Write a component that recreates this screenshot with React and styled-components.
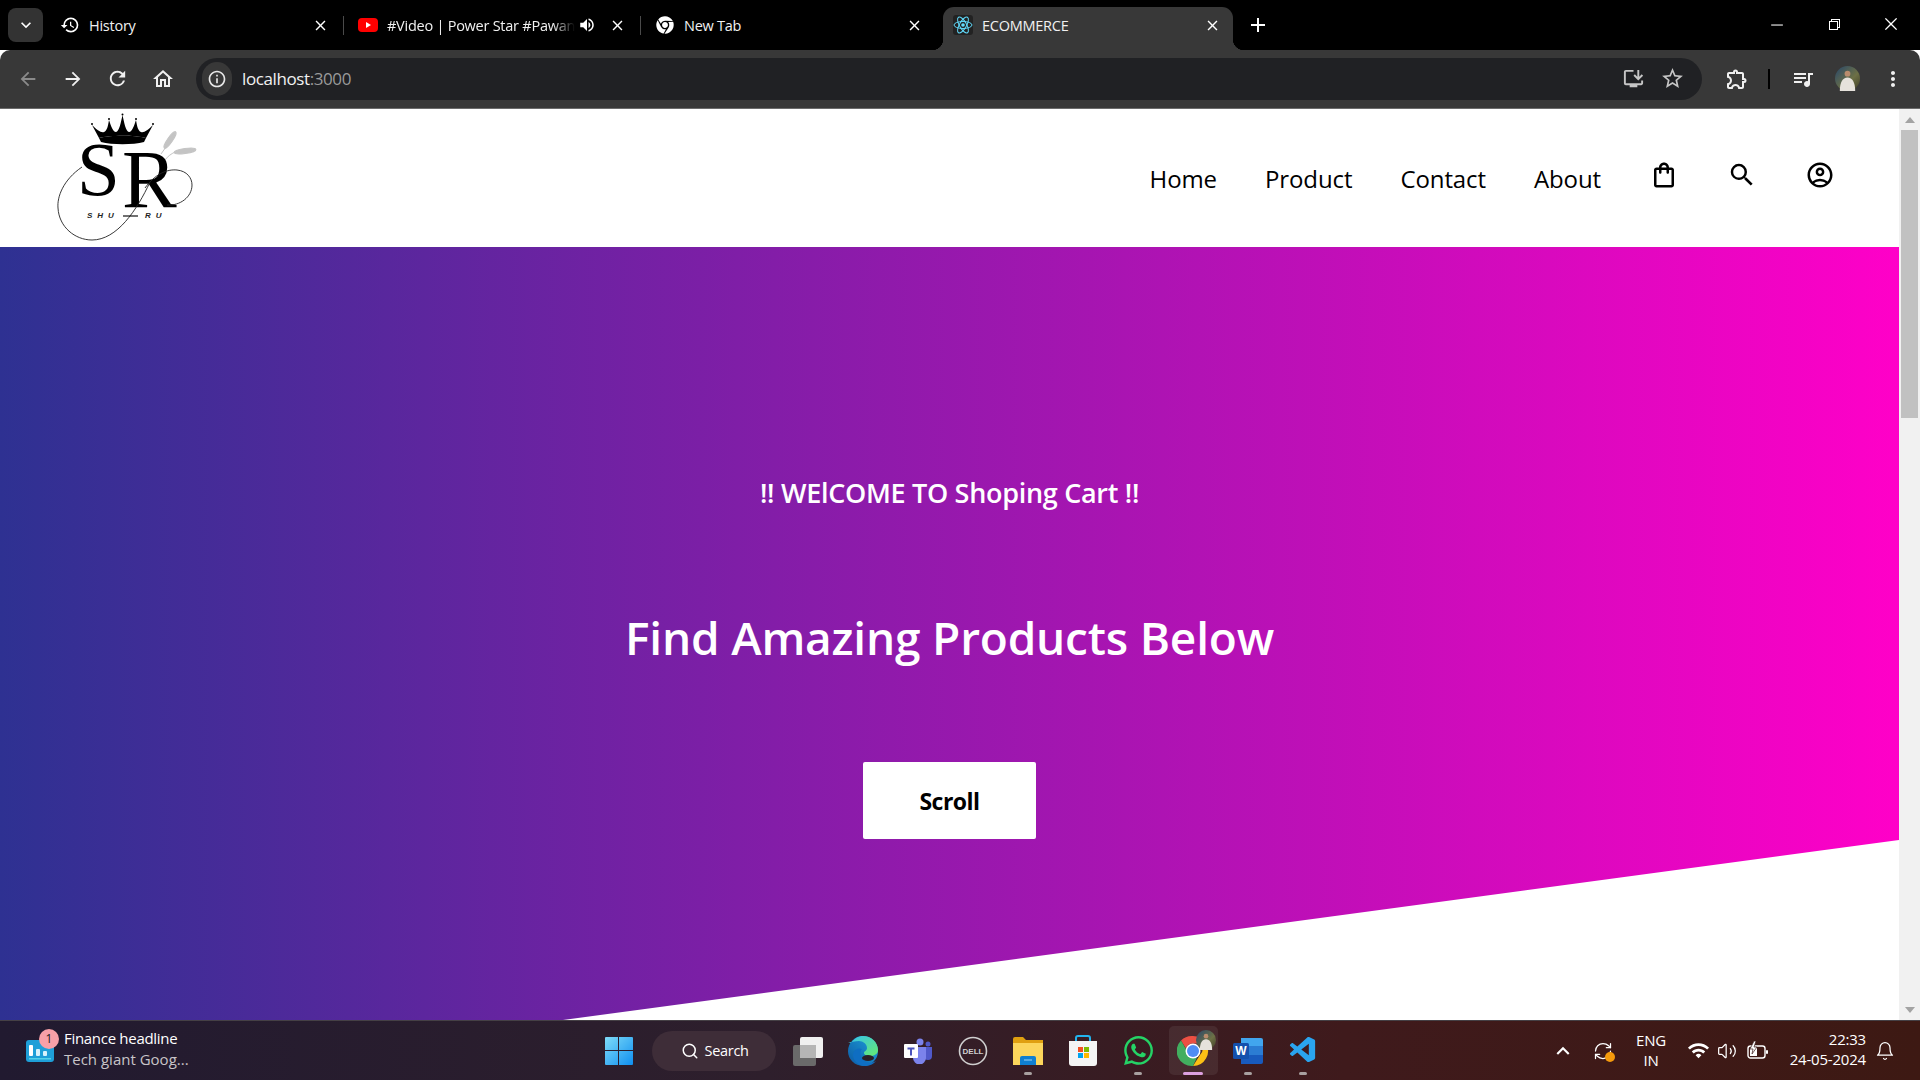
import React from "react";
import styled, { createGlobalStyle } from "styled-components";
import {
  MdHistory, MdClose, MdAdd, MdVolumeUp, MdArrowBack, MdArrowForward, MdRefresh, MdOutlineHome,
  MdInfoOutline, MdStarBorder, MdOutlineExtension, MdMoreVert, MdKeyboardArrowDown, MdOutlineShoppingBag,
  MdSearch, MdOutlineAccountCircle, MdInstallDesktop, MdOutlineQueueMusic, MdKeyboardArrowUp, MdWifi,
} from "react-icons/md";
import { FaChrome, FaWhatsapp } from "react-icons/fa";
import { VscVscode, VscChromeMinimize, VscChromeRestore, VscChromeClose } from "react-icons/vsc";
import { LuVolume2, LuSearch, LuRefreshCw, LuBell } from "react-icons/lu";

const GlobalStyle = createGlobalStyle`
  html, body { margin: 0; padding: 0; height: 100%; overflow: hidden; }
  body { font-family: "Open Sans", "Liberation Sans", sans-serif; }
  #root { height: 100%; }
`;

const tabs = [
  { title: "History", width: 298, pad: "0 15px 7px 13px", icon: <MdHistory size={20} /> },
  { title: "#Video | Power Star #Pawan Singh", width: 297, pad: "0 15px 7px 13px", icon: <YoutubeIcon />, sound: true },
  { title: "New Tab", width: 302, pad: "0 20px 7px 13px", icon: <FaChrome size={18} /> },
  { title: "ECOMMERCE", width: 290, pad: "0 12px 7px 9px", icon: <ReactIcon />, active: true },
];

function YoutubeIcon() {
  return (
    <svg width="20" height="14" viewBox="0 0 20 14">
      <rect width="20" height="14" rx="4" fill="#f00" />
      <path d="M8 4l5 3-5 3z" fill="#fff" />
    </svg>
  );
}

function ReactIcon() {
  return (
    <svg width="20" height="20" viewBox="0 0 20 20">
      <rect width="20" height="20" rx="3" fill="#222" />
      <g fill="none" stroke="#61dafb" strokeWidth="1">
        <ellipse cx="10" cy="10" rx="9" ry="3.5" />
        <ellipse cx="10" cy="10" rx="9" ry="3.5" transform="rotate(60 10 10)" />
        <ellipse cx="10" cy="10" rx="9" ry="3.5" transform="rotate(120 10 10)" />
      </g>
      <circle cx="10" cy="10" r="1.8" fill="#61dafb" />
    </svg>
  );
}

function Avatar({ size }) {
  return (
    <svg width={size} height={size} viewBox="0 0 26 26">
      <defs>
        <linearGradient id="avatarBg" x1="0" y1="0" x2="1" y2="1">
          <stop offset="0" stopColor="#27476b" />
          <stop offset="0.6" stopColor="#6d7045" />
          <stop offset="1" stopColor="#3d3a26" />
        </linearGradient>
      </defs>
      <circle cx="13" cy="13" r="13" fill="url(#avatarBg)" />
      <circle cx="13" cy="8" r="3" fill="#b98c6d" />
      <path d="M5 26c0-9 3-14 8-14s8 5 8 14z" fill="#e6e2dc" />
    </svg>
  );
}

function Logo() {
  return (
    <LogoSvg width="145" height="132" viewBox="0 0 145 132">
      <path d="M37 13C42 18 46 21 49 20 52 19 53 14 54 8 56 14 58 20 61 20 64 20 66 10 67.5 3 69 10 71 20 74 20 77 20 79 14 81 8 82 14 83 19 86 20 89 21 93 18 98 13L91 26C80 23 55 23 44 26z" fill="#000" />
      <path d="M44 26C55 23 80 23 91 26L89 30C78 33 57 33 46 30z" fill="#000" />
      <g fill="#000">
        <circle cx="37" cy="12" r="1" />
        <circle cx="54" cy="7" r="1" />
        <circle cx="67.5" cy="2.5" r="1" />
        <circle cx="81" cy="7" r="1" />
        <circle cx="98" cy="12" r="1" />
      </g>
      <g fill="#c4c4c4" stroke="#c4c4c4">
        <ellipse cx="115" cy="28" rx="10" ry="2.5" transform="rotate(-55 115 28)" />
        <path d="M106 42L111 35" fill="none" />
        <ellipse cx="130" cy="39" rx="11" ry="2.5" transform="rotate(-8 130 39)" />
        <path d="M110 48C113 44 116 42 120 40" fill="none" />
      </g>
      <LogoLetter x="22" y="83" fontSize="77">S</LogoLetter>
      <LogoLetter x="67" y="95" fontSize="82">R</LogoLetter>
      <path d="M27 55C8 68 2 85 3 96 4 115 20 128 37 128 62 128 82 98 95 70" fill="none" stroke="#222" strokeWidth="0.9" />
      <path d="M90 76C100 62 112 57 122 58 132 59 137 66 137 73 137 85 125 94 112 93" fill="none" stroke="#222" strokeWidth="0.9" />
      <LogoTag x="32" y="106">SHU</LogoTag>
      <path d="M68 104H83" stroke="#111" strokeWidth="1.2" />
      <LogoTag x="90" y="106">RU</LogoTag>
    </LogoSvg>
  );
}

function WindowsIcon() {
  return (
    <svg width="30" height="30" viewBox="0 0 30 30">
      <defs>
        <linearGradient id="winBlue" x1="0" y1="0" x2="1" y2="1">
          <stop offset="0" stopColor="#7fdcf8" />
          <stop offset="1" stopColor="#0f8ff0" />
        </linearGradient>
      </defs>
      <path d="M1 2a1 1 0 011-1h12v13H1zM15 1h13a1 1 0 011 1v12H15zM1 15h13v14H2a1 1 0 01-1-1zM15 15h14v13a1 1 0 01-1 1H15z" fill="url(#winBlue)" />
    </svg>
  );
}

function TaskViewIcon() {
  return (
    <svg width="32" height="30" viewBox="0 0 32 30">
      <rect x="1" y="9" width="23" height="21" rx="2" fill="#6a6a6a" />
      <rect x="8" y="1" width="23" height="21" rx="2" fill="#f0f0f0" />
      <rect x="8" y="9" width="16" height="13" fill="#b5b5b5" />
    </svg>
  );
}

function EdgeIcon() {
  return (
    <svg width="30" height="32" viewBox="0 0 30 32">
      <defs>
        <linearGradient id="edgeA" x1="0" y1="1" x2="1" y2="0">
          <stop offset="0" stopColor="#0c59a4" />
          <stop offset="1" stopColor="#1fa4de" />
        </linearGradient>
        <linearGradient id="edgeB" x1="0" y1="0" x2="1" y2="1">
          <stop offset="0" stopColor="#35c1f1" />
          <stop offset="1" stopColor="#66eb6e" />
        </linearGradient>
      </defs>
      <circle cx="15" cy="16" r="15" fill="url(#edgeA)" />
      <path d="M3 8C7 2 12 1 15 1c8 0 15 6 15 14 0 4-4 6-8 6-3 0-6-1-6-3 0-2 3-2 3-5 0-4-4-7-8-7-4 0-8 1-11 2z" fill="url(#edgeB)" />
      <path d="M14 14c-3 3-2 10 5 13 2 1 6 1 9-1-2 3-7 5-11 5-6 0-12-5-12-11 0-4 4-8 9-6z" fill="#0f6ec2" />
      <ellipse cx="20" cy="23" rx="6" ry="3" fill="#2a2026" />
    </svg>
  );
}

function TeamsIcon() {
  return (
    <svg width="28" height="26" viewBox="0 0 28 26">
      <circle cx="16" cy="4" r="3.5" fill="#7b83eb" />
      <circle cx="24" cy="6" r="2.5" fill="#5059c9" />
      <path d="M20 9h8v9a4 4 0 01-8 0z" fill="#5059c9" />
      <path d="M9 9h13v11a6 6 0 01-13 0z" fill="#7b83eb" />
      <rect x="0" y="6" width="14" height="14" rx="1" fill="#fff" />
      <path d="M3.5 9.500h7v2H8v6H6v-6H3.500z" fill="#4b53bc" />
    </svg>
  );
}

function DellIcon() {
  return (
    <svg width="30" height="30" viewBox="0 0 30 30">
      <circle cx="15" cy="15" r="13.500" fill="none" stroke="#cfcfcf" strokeWidth="1.6" />
      <DellText x="15" y="18">DELL</DellText>
    </svg>
  );
}

function FolderIcon() {
  return (
    <svg width="32" height="30" viewBox="0 0 32 30">
      <path d="M1 3a2 2 0 012-2h8l3 3h17v6H1z" fill="#e0a010" />
      <path d="M1 7h30v22H1z" fill="#fcd65c" />
      <path d="M8 22a2 2 0 012-2h12a2 2 0 012 2v7H8z" fill="#0f7fd0" />
      <path d="M12 24h8" stroke="#9fd4f5" strokeWidth="1" />
    </svg>
  );
}

function StoreIcon() {
  return (
    <svg width="30" height="32" viewBox="0 0 30 32">
      <path d="M8 7V3a2 2 0 012-2h10a2 2 0 012 2v4" fill="none" stroke="#22b4ee" strokeWidth="2" />
      <path d="M1 6h28v22a3 3 0 01-3 3H4a3 3 0 01-3-3z" fill="#f4f4f4" />
      <rect x="10" y="12" width="5" height="5" fill="#f25022" />
      <rect x="16" y="12" width="5" height="5" fill="#7fba00" />
      <rect x="10" y="18" width="5" height="5" fill="#00a4ef" />
      <rect x="16" y="18" width="5" height="5" fill="#ffb900" />
    </svg>
  );
}

function ChromeLogo() {
  return (
    <svg width="32" height="32" viewBox="0 0 32 32">
      <path d="M16 1a15 15 0 0113 7.500H16a7.500 7.500 0 00-7 5L4 5.500A15 15 0 0116 1z" fill="#ea4335" />
      <path d="M29 8.500A15 15 0 0116 31l7-11a7.500 7.500 0 000-11.500z" fill="#fbbc04" />
      <path d="M4 5.500l7 12a7.500 7.500 0 009 5L16 31A15 15 0 014 5.500z" fill="#34a853" />
      <circle cx="16" cy="16" r="7.500" fill="#fff" />
      <circle cx="16" cy="16" r="6" fill="#4285f4" />
    </svg>
  );
}

function WordIcon() {
  return (
    <svg width="30" height="30" viewBox="0 0 30 30">
      <path d="M8 2h20a2 2 0 012 2v6H8z" fill="#41a5ee" />
      <path d="M8 10h22v9H8z" fill="#2b7cd3" />
      <path d="M8 19h22v7a2 2 0 01-2 2H8z" fill="#185abd" />
      <rect x="0" y="7" width="16" height="16" rx="1.500" fill="#1350ad" />
      <WordLetter x="8" y="19">W</WordLetter>
    </svg>
  );
}

function WidgetIcon() {
  return (
    <svg width="28" height="22" viewBox="0 0 28 22">
      <rect width="28" height="22" rx="3" fill="#1e9fd8" />
      <rect x="3" y="5" width="4" height="11" rx="1" fill="#fff" />
      <rect x="10" y="9" width="4" height="7" rx="1" fill="#d8f2fc" />
      <rect x="17" y="11" width="4" height="5" rx="1" fill="#d8f2fc" />
      <rect x="3" y="18" width="22" height="1.500" fill="#54d2e8" />
    </svg>
  );
}

function BatteryIcon() {
  return (
    <svg width="22" height="20" viewBox="0 0 22 20">
      <rect x="1" y="5" width="17" height="12" rx="2.5" fill="none" stroke="#fff" strokeWidth="1.4" />
      <rect x="3" y="7" width="7" height="8" fill="#fff" />
      <rect x="19" y="9" width="2" height="4" rx="1" fill="#fff" />
      <path d="M7 0L3 8h3l-1 5 5-7H7l2-6z" fill="#fff" stroke="#3d1c1c" strokeWidth="0.7" />
    </svg>
  );
}

const App = () => (
  <>
    <GlobalStyle />
    <Screen>
      <TabStrip>
        <TabSearchButton><MdKeyboardArrowDown size={20} /></TabSearchButton>
        {tabs.map((tab, index) => (
          <Tab key={tab.title} $width={tab.width} $pad={tab.pad} $active={tab.active} $divider={index < 2}>
            <TabIcon>{tab.icon}</TabIcon>
            <TabTitle $fade={tab.sound}>{tab.title}</TabTitle>
            {tab.sound && <SoundIcon><MdVolumeUp size={18} /></SoundIcon>}
            <TabClose><MdClose size={17} /></TabClose>
          </Tab>
        ))}
        <NewTab><MdAdd size={24} /></NewTab>
        <WindowControls>
          <WindowButton><VscChromeMinimize size={17} /></WindowButton>
          <WindowButton><VscChromeRestore size={16} /></WindowButton>
          <WindowButton><VscChromeClose size={18} /></WindowButton>
        </WindowControls>
      </TabStrip>

      <Toolbar>
        <ToolButton $muted><MdArrowBack size={22} /></ToolButton>
        <ToolButton><MdArrowForward size={22} /></ToolButton>
        <ToolButton><MdRefresh size={23} /></ToolButton>
        <ToolButton><MdOutlineHome size={24} /></ToolButton>
        <AddressBar>
          <SiteInfo><MdInfoOutline size={20} /></SiteInfo>
          <Url>localhost<UrlPort>:3000</UrlPort></Url>
          <AddressAction><MdInstallDesktop size={23} /></AddressAction>
          <AddressAction><MdStarBorder size={25} /></AddressAction>
        </AddressBar>
        <ExtensionButton><MdOutlineExtension size={24} /></ExtensionButton>
        <ToolDivider />
        <ToolButton><MdOutlineQueueMusic size={24} /></ToolButton>
        <ToolButton><Avatar size={25} /></ToolButton>
        <ToolButton><MdMoreVert size={24} /></ToolButton>
      </Toolbar>

      <Viewport>
        <Page>
          <Navbar>
            <Logo />
            <NavLinks>
              <NavLink>Home</NavLink>
              <NavLink>Product</NavLink>
              <NavLink>Contact</NavLink>
              <NavLink>About</NavLink>
              <NavIcon><MdOutlineShoppingBag size={30} /></NavIcon>
              <NavIcon><MdSearch size={30} /></NavIcon>
              <NavIcon><MdOutlineAccountCircle size={30} /></NavIcon>
            </NavLinks>
          </Navbar>
          <Hero>
            <Welcome>!! WElCOME TO Shoping Cart !!</Welcome>
            <Headline>Find Amazing Products Below</Headline>
            <ScrollButton>Scroll</ScrollButton>
          </Hero>
        </Page>
        <Scrollbar>
          <ScrollArrow />
          <ScrollThumb />
          <ScrollArrow $down />
        </Scrollbar>
      </Viewport>

      <Taskbar>
        <Widget>
          <WidgetTile>
            <WidgetIcon />
            <WidgetBadge>1</WidgetBadge>
          </WidgetTile>
          <WidgetText>
            <WidgetTitle>Finance headline</WidgetTitle>
            <WidgetSub>Tech giant Goog...</WidgetSub>
          </WidgetText>
        </Widget>

        <TaskCenter>
          <StartButton><WindowsIcon /></StartButton>
          <SearchPill><LuSearch size={18} /><span>Search</span></SearchPill>
          <TaskItem><TaskViewIcon /></TaskItem>
          <TaskItem><EdgeIcon /></TaskItem>
          <TaskItem><TeamsIcon /></TaskItem>
          <TaskItem><DellIcon /></TaskItem>
          <TaskItem $open><FolderIcon /></TaskItem>
          <TaskItem><StoreIcon /></TaskItem>
          <TaskItem $open><FaWhatsapp size={33} color="#25d366" /></TaskItem>
          <TaskItem $active>
            <ChromeLogo />
            <ChromeBadge><Avatar size={20} /></ChromeBadge>
          </TaskItem>
          <TaskItem $open><WordIcon /></TaskItem>
          <TaskItem $open><VscVscode size={31} color="#2aa4ef" /></TaskItem>
        </TaskCenter>

        <Tray>
          <TrayIcon $width={30}><MdKeyboardArrowUp size={26} /></TrayIcon>
          <TrayIcon $width={30} $gap={10}>
            <LuRefreshCw size={20} strokeWidth={1.5} />
            <SyncDot />
          </TrayIcon>
          <Language>
            <span>ENG</span>
            <span>IN</span>
          </Language>
          <TrayIcon $width={24} $gap={14}><MdWifi size={23} /></TrayIcon>
          <TrayIcon $width={24} $gap={5}><LuVolume2 size={20} strokeWidth={1.5} /></TrayIcon>
          <TrayIcon $width={24} $gap={7}><BatteryIcon /></TrayIcon>
          <Clock>
            <span>22:33</span>
            <span>24-05-2024</span>
          </Clock>
          <TrayIcon $width={22} $gap={8}><LuBell size={20} strokeWidth={1.5} /></TrayIcon>
        </Tray>
      </Taskbar>
    </Screen>
  </>
);

export default App;

const Screen = styled.div`
  display: flex;
  flex-direction: column;
  height: 100%;
  overflow: hidden;
`;

// Tab strip
const TabStrip = styled.div`
  display: flex;
  height: 50px;
  align-items: flex-end;
  padding-left: 8px;
  background: #000;
  color: #fff;
  flex-shrink: 0;
`;

const TabSearchButton = styled.div`
  display: flex;
  align-items: center;
  justify-content: center;
  align-self: flex-start;
  width: 35px;
  height: 34px;
  margin: 8px 3px 0 0;
  border-radius: 8px;
  background: #333;
`;

const Tab = styled.div`
  position: relative;
  display: flex;
  align-items: center;
  box-sizing: border-box;
  width: ${({ $width }) => $width}px;
  height: 43px;
  padding: ${({ $pad }) => $pad};
  border-radius: 11px 11px 0 0;
  background: ${({ $active }) => ($active ? "#383838" : "transparent")};

  &::after {
    content: "";
    position: absolute;
    right: 0;
    top: 9px;
    bottom: 15px;
    width: 1px;
    background: ${({ $divider }) => ($divider ? "#4a4a4a" : "transparent")};
  }

  ${({ $active }) =>
    $active &&
    `
    &::before, &::after {
      content: "";
      position: absolute;
      top: auto;
      bottom: 0;
      width: 11px;
      height: 11px;
    }
    &::before {
      left: -11px;
      background: radial-gradient(circle at 0 0, transparent 11px, #383838 11.5px);
    }
    &::after {
      right: -11px;
      background: radial-gradient(circle at 100% 0, transparent 11px, #383838 11.5px);
    }
  `}
`;

const TabIcon = styled.span`
  display: flex;
  align-items: center;
  justify-content: center;
  width: 22px;
  margin-right: 8px;
  flex-shrink: 0;
`;

const TabTitle = styled.span`
  flex: 1;
  min-width: 0;
  overflow: hidden;
  white-space: nowrap;
  font-size: 14.5px;
  letter-spacing: -0.25px;
  color: #f1f1f1;
  ${({ $fade }) => $fade && "mask-image: linear-gradient(to right, #000 88%, transparent);"}
`;

const SoundIcon = styled.span`
  display: flex;
  margin: 0 9px 0 3px;
`;

const TabClose = styled.span`
  display: flex;
  margin-left: 4px;
`;

const NewTab = styled.span`
  display: flex;
  align-self: center;
  margin-left: 13px;
`;

const WindowControls = styled.div`
  display: flex;
  align-self: flex-start;
  margin-left: auto;
  height: 48px;
  padding-right: 1px;
`;

const WindowButton = styled.span`
  display: flex;
  align-items: center;
  justify-content: center;
  width: 57px;
`;

// Toolbar
const Toolbar = styled.div`
  display: flex;
  align-items: center;
  box-sizing: border-box;
  height: 59px;
  padding: 0 5px 1px;
  background: #383838;
  border-bottom: 1px solid #6b6b6b;
  border-radius: 10px 10px 0 0;
  color: #e8e8e8;
  flex-shrink: 0;
`;

const ToolButton = styled.span`
  display: flex;
  align-items: center;
  justify-content: center;
  width: 45px;
  flex-shrink: 0;
  color: ${({ $muted }) => ($muted ? "#8a8a8a" : "#f0f0f0")};
`;

const AddressBar = styled.div`
  display: flex;
  flex: 1;
  align-items: center;
  height: 42px;
  margin-left: 11px;
  padding: 0 12px 0 6px;
  border-radius: 21px;
  background: #202124;
`;

const SiteInfo = styled.span`
  display: flex;
  align-items: center;
  justify-content: center;
  width: 30px;
  height: 34px;
  border-radius: 17px;
  background: #383838;
`;

const Url = styled.span`
  flex: 1;
  margin-left: 10px;
  font-size: 17px;
  letter-spacing: -0.4px;
  color: #f1f1f1;
`;

const UrlPort = styled.span`
  color: #9a9a9a;
`;

const AddressAction = styled.span`
  display: flex;
  justify-content: center;
  width: 36px;
  margin-left: 3px;
  color: #c6c6c6;
`;

const ExtensionButton = styled(ToolButton)`
  margin-left: 12px;
`;

const ToolDivider = styled.span`
  width: 2px;
  height: 20px;
  margin: 0 10px 0 9px;
  background: #000;
`;

// Page inside the browser
const Viewport = styled.div`
  display: flex;
  flex: 1;
  min-height: 0;
  background: #fff;
`;

const Page = styled.main`
  display: flex;
  flex: 1;
  flex-direction: column;
  min-width: 0;
`;

const Navbar = styled.header`
  display: flex;
  align-items: center;
  justify-content: space-between;
  box-sizing: border-box;
  height: 138px;
  padding: 0 64px 0 55px;
`;

const LogoSvg = styled.svg`
  align-self: flex-start;
  margin-top: 3px;
`;

const LogoLetter = styled.text`
  font-family: "Liberation Serif", serif;
  fill: #000;
`;

const LogoTag = styled.text`
  font-family: "Liberation Sans", sans-serif;
  font-size: 8px;
  font-weight: 700;
  font-style: italic;
  letter-spacing: 5px;
  fill: #222;
`;

const NavLinks = styled.nav`
  display: flex;
  align-items: center;
  gap: 48px;
`;

const NavLink = styled.a`
  font-size: 24px;
  letter-spacing: -0.1px;
  color: #000;
`;

const NavIcon = styled.span`
  display: flex;
  margin-bottom: 6px;
  color: #000;
`;

const Hero = styled.section`
  display: flex;
  flex: 1;
  flex-direction: column;
  align-items: center;
  padding-top: 227px;
  min-height: 0;
  background: linear-gradient(to right, #2e3192, #ff00c8);
  clip-path: polygon(0 0, 100% 0, 100% 593px, 563px 100%, 0 100%);
  color: #fff;
`;

const Welcome = styled.p`
  margin: 0;
  font-size: 27px;
  font-weight: 600;
  line-height: 38px;
  letter-spacing: -0.3px;
`;

const Headline = styled.h1`
  margin: 93px 0 0;
  font-size: 46px;
  font-weight: 600;
  line-height: 65px;
  letter-spacing: -0.2px;
`;

const ScrollButton = styled.button`
  width: 173px;
  height: 77px;
  margin-top: 92px;
  border: none;
  border-radius: 2px;
  background: #fff;
  color: #000;
  font-family: inherit;
  font-size: 23px;
  font-weight: 700;
  letter-spacing: -0.5px;
`;

const Scrollbar = styled.aside`
  display: flex;
  flex-direction: column;
  align-items: center;
  width: 21px;
  background: #f1f1f1;
`;

const ScrollArrow = styled.span`
  flex-shrink: 0;
  width: 0;
  height: 0;
  margin: ${({ $down }) => ($down ? "auto 0 7px" : "8px 0 7px")};
  border-left: 5px solid transparent;
  border-right: 5px solid transparent;
  border-${({ $down }) => ($down ? "top" : "bottom")}: 6px solid #a3a3a3;
`;

const ScrollThumb = styled.span`
  width: 17px;
  height: 288px;
  background: #c1c1c1;
`;

// Windows taskbar
const Taskbar = styled.footer`
  display: grid;
  grid-template-columns: 1fr auto 1fr;
  align-items: center;
  box-sizing: border-box;
  height: 60px;
  border-top: 1px solid #454045;
  background: linear-gradient(to right, #211a30, #2e1f2c 40%, #3f1a1c 70%, #3d1913);
  color: #fff;
  flex-shrink: 0;
`;

const Widget = styled.div`
  display: flex;
  align-items: center;
  padding-left: 26px;
`;

const WidgetTile = styled.span`
  position: relative;
  display: flex;
  margin-right: 10px;
`;

const WidgetBadge = styled.span`
  position: absolute;
  right: -5px;
  top: -11px;
  width: 20px;
  height: 20px;
  border-radius: 50%;
  background: #f8a0a8;
  color: #222;
  font-size: 12px;
  line-height: 20px;
  text-align: center;
`;

const WidgetText = styled.div`
  display: flex;
  flex-direction: column;
  margin-bottom: 3px;
  font-size: 15px;
  line-height: 21px;
  letter-spacing: -0.3px;
`;

const WidgetTitle = styled.span`
  color: #fff;
`;

const WidgetSub = styled.span`
  color: #c8c4c8;
  letter-spacing: 0;
`;

const TaskCenter = styled.div`
  display: flex;
  align-items: center;
  padding-left: 14px;
`;

const StartButton = styled.span`
  display: flex;
  margin-right: 18px;
`;

const SearchPill = styled.div`
  display: flex;
  align-items: center;
  gap: 6px;
  box-sizing: border-box;
  width: 124px;
  height: 40px;
  margin-right: 5px;
  padding-left: 29px;
  border-radius: 20px;
  background: #3e2d38;
  font-size: 14.5px;
  letter-spacing: -0.3px;
`;

const TaskItem = styled.span`
  position: relative;
  display: flex;
  align-items: center;
  justify-content: center;
  width: 55px;
  height: 49px;

  ${({ $active }) =>
    $active &&
    `
    &::before {
      content: "";
      position: absolute;
      left: 3px;
      right: 3px;
      top: 0;
      bottom: 0;
      border-radius: 5px;
      background: rgba(255, 255, 255, 0.07);
    }
  `}

  &::after {
    content: "";
    position: absolute;
    left: 50%;
    bottom: 0;
    display: ${({ $active, $open }) => ($active || $open ? "block" : "none")};
    width: ${({ $active }) => ($active ? 20 : 8)}px;
    height: 3px;
    border-radius: 2px;
    transform: translateX(-50%);
    background: ${({ $active }) => ($active ? "#dda0e0" : "#a8a0a0")};
  }
`;

const ChromeBadge = styled.span`
  position: absolute;
  right: 5px;
  top: 4px;
  display: flex;
`;

const Tray = styled.div`
  display: flex;
  align-items: center;
  justify-content: flex-end;
  padding-right: 24px;
  font-size: 15px;
`;

const TrayIcon = styled.span`
  position: relative;
  display: flex;
  justify-content: center;
  width: ${({ $width }) => $width}px;
  margin-left: ${({ $gap }) => $gap || 0}px;
`;

const SyncDot = styled.span`
  position: absolute;
  right: 3px;
  bottom: -1px;
  width: 10px;
  height: 10px;
  border-radius: 50%;
  background: #f59a0c;
`;

const Language = styled.div`
  display: flex;
  flex-direction: column;
  align-items: center;
  width: 42px;
  margin: 0 0 2px 12px;
  line-height: 20px;
  letter-spacing: -0.2px;
`;

const Clock = styled.div`
  display: flex;
  flex-direction: column;
  align-items: flex-end;
  width: 86px;
  margin: 0 0 4px 10px;
  line-height: 20px;
  letter-spacing: -0.2px;
`;

const DellText = styled.text`
  font-family: "Liberation Sans", sans-serif;
  font-size: 8px;
  font-weight: 700;
  text-anchor: middle;
  fill: #cfcfcf;
`;

const WordLetter = styled.text`
  font-family: "Liberation Sans", sans-serif;
  font-size: 12px;
  font-weight: 700;
  text-anchor: middle;
  fill: #fff;
`;
